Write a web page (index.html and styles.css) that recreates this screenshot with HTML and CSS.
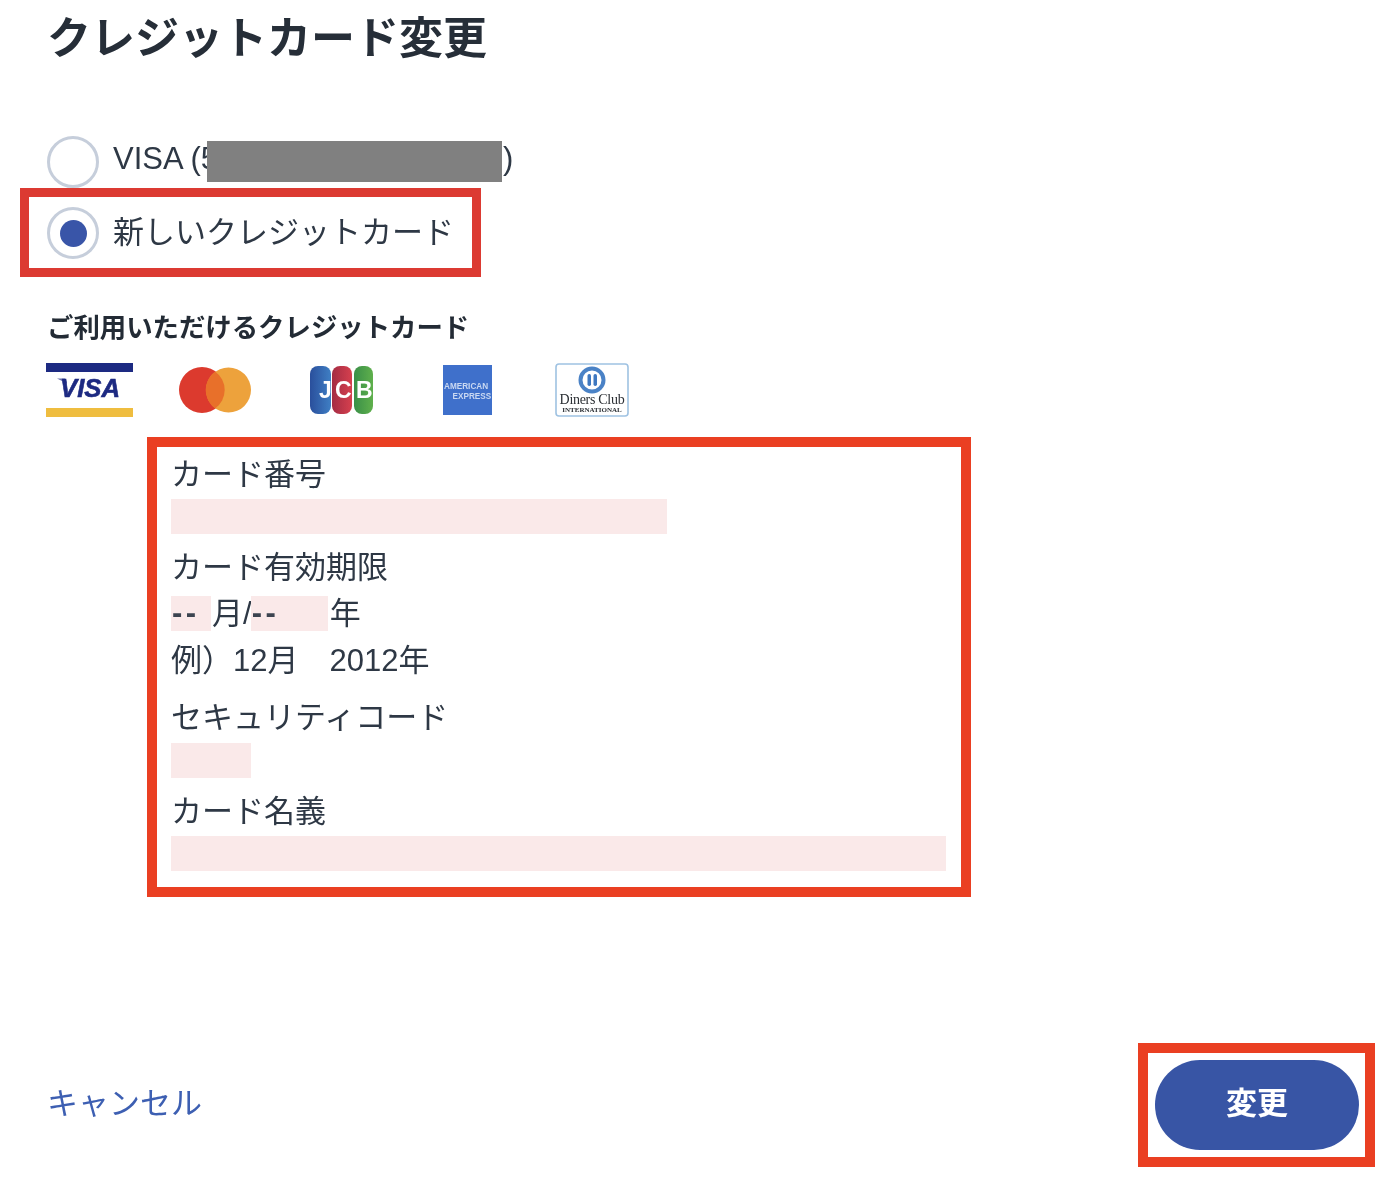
FILE: index.html
```html
<!DOCTYPE html>
<html lang="ja">
<head>
<meta charset="utf-8">
<title>クレジットカード変更</title>
<link rel="stylesheet" href="styles.css">
</head>
<body>
<main class="page">
  <h1 class="title">クレジットカード変更</h1>

  <div class="radios">
    <label class="radio-row">
      <span class="radio"></span>
      <span class="radio-text">VISA (5<span class="redact-slot"></span>)</span>
      <span class="redact"></span>
    </label>
    <label class="radio-row">
      <span class="radio radio-on"></span>
      <span class="radio-text">新しいクレジットカード</span>
      <span class="mark"></span>
    </label>
  </div>

  <h2 class="cards-title">ご利用いただけるクレジットカード</h2>
  <div class="cards">
    <svg class="logo logo-visa" width="87" height="54" viewBox="0 0 87 54">
      <rect x="0" y="0" width="87" height="9" fill="#1d2a82"/>
      <rect x="0" y="45" width="87" height="9" fill="#efbd3f"/>
      <path d="M11 15.500h8l2 5z" fill="#6d74ad"/>
      <text x="14" y="34" textLength="60" lengthAdjust="spacingAndGlyphs" class="t-visa">VISA</text>
    </svg>
    <svg class="logo logo-mc" width="72" height="46" viewBox="0 0 72 46">
      <circle cx="23" cy="23" r="23" fill="#dc3a2e"/>
      <circle cx="49.500" cy="23" r="22.500" fill="#eda23c"/>
      <path d="M36 4.500a22.500 22.500 0 0 1 0 37a23 23 0 0 1 0-37z" fill="#e8702a"/>
    </svg>
    <svg class="logo logo-jcb" width="63" height="48" viewBox="0 0 63 48">
      <defs>
        <linearGradient id="gb" x1="0" x2="1"><stop offset="0" stop-color="#2a4f9c"/><stop offset="1" stop-color="#3f7fc4"/></linearGradient>
        <linearGradient id="gr" x1="0" x2="1"><stop offset="0" stop-color="#a42c44"/><stop offset="1" stop-color="#d6404e"/></linearGradient>
        <linearGradient id="gg" x1="0" x2="1"><stop offset="0" stop-color="#3a8f48"/><stop offset="1" stop-color="#5fb04c"/></linearGradient>
      </defs>
      <rect x="0" y="0" width="21" height="48" rx="8" fill="url(#gb)"/>
      <rect x="22" y="0" width="20" height="48" rx="8" fill="url(#gr)"/>
      <rect x="44" y="0" width="19" height="48" rx="8" fill="url(#gg)"/>
      <text x="9" y="32" class="t-jcb">J</text>
      <text x="25" y="32" class="t-jcb">C</text>
      <text x="46" y="32" class="t-jcb">B</text>
    </svg>
    <svg class="logo logo-amex" width="49" height="50" viewBox="0 0 49 50">
      <rect width="49" height="50" fill="#3f70cb"/>
      <text x="1" y="24" class="t-amex">AMERICAN</text>
      <text x="9.500" y="34" class="t-amex">EXPRESS</text>
    </svg>
    <svg class="logo logo-diners" width="74" height="54" viewBox="0 0 74 54">
      <rect x="1" y="1" width="72" height="52" rx="3" fill="#fff" stroke="#9fc2e2" stroke-width="1.600"/>
      <circle cx="37" cy="17" r="11.500" fill="#fff" stroke="#4a82c6" stroke-width="4"/>
      <rect x="32.500" y="11" width="3.500" height="12" rx="1.700" fill="#3f78c0"/>
      <rect x="38.500" y="11" width="3.500" height="12" rx="1.700" fill="#3f78c0"/>
      <text x="37" y="41" text-anchor="middle" class="t-diners">Diners Club</text>
      <text x="37" y="49" text-anchor="middle" class="t-intl">INTERNATIONAL</text>
    </svg>
  </div>

  <form class="card-form">
    <div class="field-label">カード番号</div>
    <input class="field field-number" type="text" aria-label="カード番号">

    <div class="field-label field-gap">カード有効期限</div>
    <div class="date-row">
      <span class="select select-month">--</span><span class="date-unit">月/</span><span class="select select-year">--</span><span class="date-unit">年</span>
    </div>
    <div class="date-example">例）12月　2012年</div>

    <div class="field-label field-gap">セキュリティコード</div>
    <input class="field field-cvc" type="text" aria-label="セキュリティコード">

    <div class="field-label field-gap-s">カード名義</div>
    <input class="field field-name" type="text" aria-label="カード名義">
  </form>

  <footer class="actions">
    <a class="cancel" href="#">キャンセル</a>
    <div class="submit-mark">
      <button class="submit" type="button">変更</button>
    </div>
  </footer>
</main>
</body>
</html>
```
FILE: styles.css
```css
* { box-sizing: border-box; }
html, body { margin: 0; padding: 0; background: #fff; }
body {
  font-family: "Liberation Sans", "Noto Sans CJK JP", sans-serif;
  color: #2e3845;
}
.page {
  display: flex;
  flex-direction: column;
  align-items: flex-start;
  padding: 0 13px 0 48px;
  height: 1180px;
  overflow: hidden;
}
.title {
  margin: 2px 0 -2px -1px;
  font-size: 44px;
  line-height: 74px;
  font-weight: 700;
  color: #262e38;
  filter: blur(0.5px);
}
.radios {
  display: flex;
  flex-direction: column;
  gap: 19px;
  margin-top: 62px;
}
.radio-row {
  position: relative;
  display: flex;
  align-items: center;
  gap: 14px;
  height: 52px;
  font-size: 31px;
  line-height: 46px;
}
.radio {
  flex: none;
  display: flex;
  align-items: center;
  justify-content: center;
  width: 52px;
  height: 52px;
  margin-left: -1px;
  border: 3.500px solid #c6cedb;
  border-radius: 50%;
  background: #fff;
  filter: blur(0.5px);
}
.radio-on::before {
  content: "";
  width: 27px;
  height: 27px;
  border-radius: 50%;
  background: #3955a8;
}
.radio-text { position: relative; top: -3px; white-space: nowrap; filter: blur(0.4px); }
.radio-row:nth-child(2) .radio-text { top: 0; }
.redact-slot { display: inline-block; width: 285px; height: 1px; }
.redact {
  position: absolute;
  left: 159px;
  top: 5px;
  width: 295px;
  height: 41px;
  background: #808080;
}
.mark {
  position: absolute;
  left: -28px;
  top: -19px;
  width: 461px;
  height: 89px;
  border: 9px solid #dc3a32;
  pointer-events: none;
}
.cards-title {
  margin: 49px 0 0 -1px;
  font-size: 26.400px;
  line-height: 40px;
  font-weight: 700;
  color: #232b35;
  filter: blur(0.4px);
}
.cards {
  display: flex;
  align-items: center;
  height: 54px;
  margin: 15px 0 0 -2px;
}
.logo { flex: none; display: block; filter: blur(0.6px); }
.logo-mc { margin-left: 46px; }
.logo-jcb { margin-left: 59px; }
.logo-amex { margin-left: 70px; }
.logo-diners { margin-left: 63px; }
.t-visa { font: italic 700 26px "Liberation Sans", sans-serif; fill: #1d2a82; stroke: #1d2a82; stroke-width: 0.6px; }
.t-jcb { font: 700 23px "Liberation Sans", sans-serif; fill: #fff; }
.t-amex { font: 700 8.200px "Liberation Sans", sans-serif; fill: #c9d8f2; }
.t-diners { font: 400 14px "Liberation Serif", serif; fill: #2c3035; letter-spacing: -0.3px; }
.t-intl { font: 700 7px "Liberation Serif", serif; fill: #2c3035; }
.card-form {
  width: 824px;
  height: 460px;
  margin: 20px 0 0 99px;
  padding: 5px 15px 0 14px;
  border: 10px solid #ea3f22;
  font-size: 31px;
  line-height: 46px;
}
.field-label, .date-row, .date-example { filter: blur(0.4px); }
.field-label { height: 46px; }
.field-gap { margin-top: 11px; }
.field-gap-s { margin-top: 11px; }
.field {
  display: block;
  height: 35px;
  margin-top: 1px;
  border: 0;
  padding: 0;
  background: #fae9e9;
  outline: 0;
}
.field-number { width: 496px; }
.field-cvc { width: 80px; margin-top: 2px; }
.field-name { width: 100%; margin-top: 1px; }
.date-row { display: flex; align-items: center; height: 46px; }
.select {
  height: 35px;
  line-height: 34px;
  margin-top: -2px;
  background: #fae9e9;
  padding-left: 1px;
  letter-spacing: 3.500px;
  font-weight: 700;
  color: #3c4450;
}
.select-month { width: 40px; }
.select-year { width: 77px; margin-left: -1px; }
.date-unit { padding-left: 1px; }
.select-year + .date-unit { padding-left: 2px; }
.date-example { height: 46px; margin-top: 1px; }
.actions {
  display: flex;
  justify-content: space-between;
  align-items: center;
  width: 100%;
  margin-top: 146px;
}
.cancel {
  margin-left: -1px;
  color: #3d5fb2;
  font-size: 31px;
  line-height: 46px;
  text-decoration: none;
  padding-bottom: 2px;
  filter: blur(0.4px);
}
.submit-mark {
  width: 237px;
  height: 124px;
  padding: 7px 6px 7px 7px;
  border: 10px solid #ea3f22;
}
.submit {
  display: block;
  width: 100%;
  height: 100%;
  padding: 0 0 9px;
  border: 0;
  border-radius: 46px;
  background: #3855a5;
  color: #fff;
  font: 700 31px "Noto Sans CJK JP", sans-serif;
  filter: blur(0.4px);
}
```
